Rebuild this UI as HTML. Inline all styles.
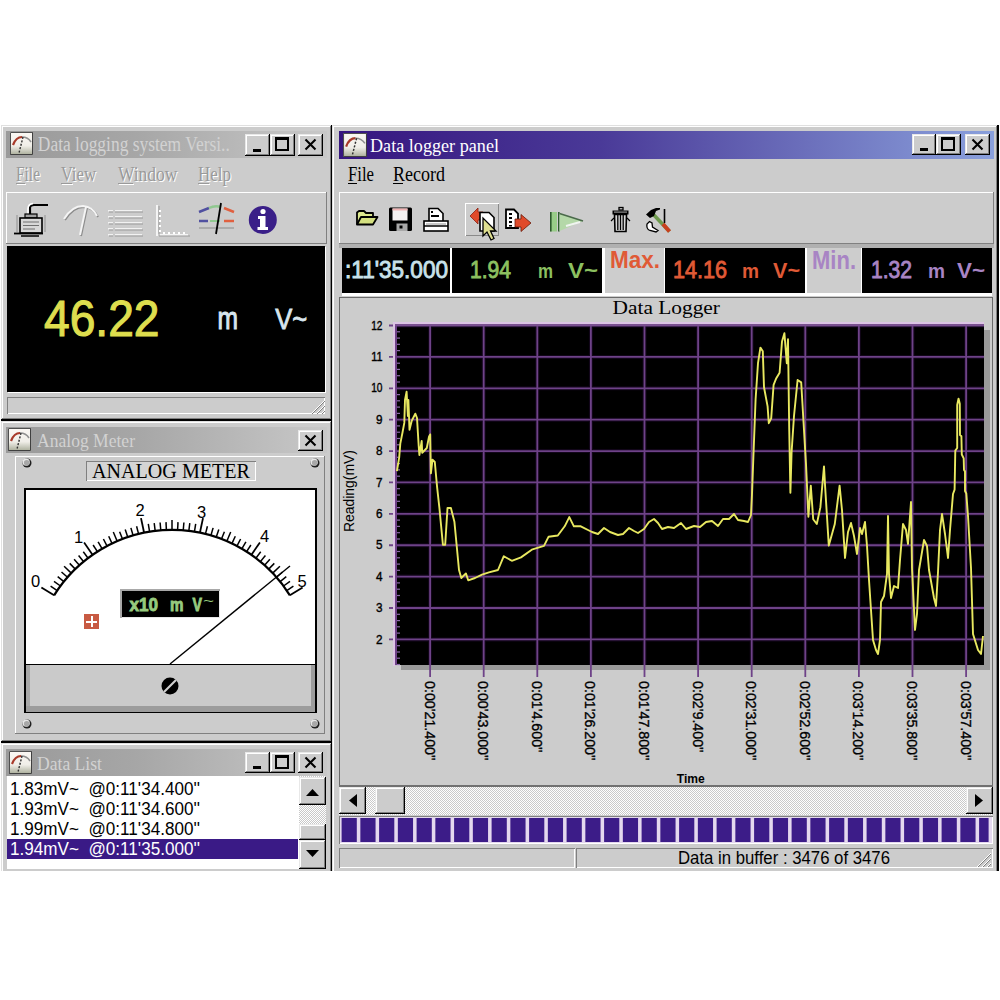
<!DOCTYPE html><html><head><meta charset="utf-8"><style>
html,body{margin:0;padding:0;background:#fff;width:1000px;height:1000px;overflow:hidden;position:relative}
svg{overflow:visible}
</style></head><body>
<div style="position:absolute;left:1px;top:125px;width:332px;height:296px;background:#cccccc;box-shadow:inset -2px -2px #000,inset 1px 1px #e0e0e0,inset -3px -3px #808080,inset 2px 2px #fff"></div>
<div style="position:absolute;left:6px;top:131px;width:321px;height:27px;background:linear-gradient(90deg,#9a9a9a,#a6a6a6 40%,#c8c8c8)"></div>
<svg style="position:absolute;left:10px;top:132px" width="23" height="23" viewBox="0 0 23 23">
<defs><linearGradient id="ig10132" x1="0" y1="0" x2="0" y2="1"><stop offset="0" stop-color="#fbf8f4"/><stop offset="0.6" stop-color="#f0eee8"/><stop offset="1" stop-color="#a8ac98"/></linearGradient></defs>
<rect x="0" y="0" width="23" height="23" fill="url(#ig10132)"/>
<path d="M0.5 23 L0.5 0.5 L23 0.5" stroke="#505050" stroke-width="1" fill="none"/>
<path d="M1 22.5 L22.5 22.5 L22.5 1" stroke="#404040" stroke-width="1" fill="none"/>
<path d="M3 13 Q6 5 12 5" stroke="#a83a2a" stroke-width="2.2" fill="none"/>
<path d="M12 5 Q18 5 21 10" stroke="#909090" stroke-width="1.5" fill="none"/>
<path d="M13 5 L9 21" stroke="#303030" stroke-width="1.4" stroke-dasharray="2 1.5" fill="none"/>
</svg>
<div style="position:absolute;left:245px;top:134px;width:25px;height:22px;background:#cccccc;box-shadow:inset -1px -1px #000,inset 1px 1px #e8e8e8,inset -2px -2px #808080,inset 2px 2px #fff;"></div>
<div style="position:absolute;left:253px;top:149px;width:8px;height:3px;background:#000"></div>
<div style="position:absolute;left:270px;top:134px;width:25px;height:22px;background:#cccccc;box-shadow:inset -1px -1px #000,inset 1px 1px #e8e8e8,inset -2px -2px #808080,inset 2px 2px #fff;"></div>
<div style="position:absolute;left:275px;top:137px;width:14px;height:14px;border:2px solid #000;border-top-width:3px;box-sizing:border-box"></div>
<div style="position:absolute;left:298px;top:134px;width:25px;height:22px;background:#cccccc;box-shadow:inset -1px -1px #000,inset 1px 1px #e8e8e8,inset -2px -2px #808080,inset 2px 2px #fff;"></div>
<svg style="position:absolute;left:298px;top:134px" width="25" height="22"><path d="M7.5 5.5 L17.5 15.5 M17.5 5.5 L7.5 15.5" stroke="#000" stroke-width="2.1"/></svg>
<div style="position:absolute;left:16px;top:183px;width:9px;height:1px;background:#9a9a9a;box-shadow:1px 1px #fff"></div>
<div style="position:absolute;left:60.8px;top:183px;width:11px;height:1px;background:#9a9a9a;box-shadow:1px 1px #fff"></div>
<div style="position:absolute;left:118px;top:183px;width:15px;height:1px;background:#9a9a9a;box-shadow:1px 1px #fff"></div>
<div style="position:absolute;left:198px;top:183px;width:11px;height:1px;background:#9a9a9a;box-shadow:1px 1px #fff"></div>
<div style="position:absolute;left:6px;top:192px;width:321px;height:52px;background:#cccccc;box-shadow:inset -1px -1px #808080,inset 1px 1px #fff;"></div>
<div style="position:absolute;left:7px;top:246px;width:318px;height:146px;background:#000;box-shadow:1px 1px #fff"></div>
<div style="position:absolute;left:7px;top:397px;width:318px;height:17px;background:#cccccc;box-shadow:inset 1px 1px #808080,inset -1px -1px #fff;"></div>
<div style="position:absolute;left:1px;top:421px;width:332px;height:322px;background:#cccccc;box-shadow:inset -2px -2px #000,inset 1px 1px #e0e0e0,inset -3px -3px #808080,inset 2px 2px #fff"></div>
<div style="position:absolute;left:6px;top:427px;width:321px;height:26px;background:linear-gradient(90deg,#9a9a9a,#a6a6a6 40%,#c8c8c8)"></div>
<svg style="position:absolute;left:8px;top:428px" width="23" height="23" viewBox="0 0 23 23">
<defs><linearGradient id="ig8428" x1="0" y1="0" x2="0" y2="1"><stop offset="0" stop-color="#fbf8f4"/><stop offset="0.6" stop-color="#f0eee8"/><stop offset="1" stop-color="#a8ac98"/></linearGradient></defs>
<rect x="0" y="0" width="23" height="23" fill="url(#ig8428)"/>
<path d="M0.5 23 L0.5 0.5 L23 0.5" stroke="#505050" stroke-width="1" fill="none"/>
<path d="M1 22.5 L22.5 22.5 L22.5 1" stroke="#404040" stroke-width="1" fill="none"/>
<path d="M3 13 Q6 5 12 5" stroke="#a83a2a" stroke-width="2.2" fill="none"/>
<path d="M12 5 Q18 5 21 10" stroke="#909090" stroke-width="1.5" fill="none"/>
<path d="M13 5 L9 21" stroke="#303030" stroke-width="1.4" stroke-dasharray="2 1.5" fill="none"/>
</svg>
<div style="position:absolute;left:298px;top:430px;width:25px;height:21px;background:#cccccc;box-shadow:inset -1px -1px #000,inset 1px 1px #e8e8e8,inset -2px -2px #808080,inset 2px 2px #fff;"></div>
<svg style="position:absolute;left:298px;top:430px" width="25" height="21"><path d="M7.5 5.5 L17.5 15.5 M17.5 5.5 L7.5 15.5" stroke="#000" stroke-width="2.1"/></svg>
<div style="position:absolute;left:15px;top:456px;width:310px;height:278px;background:#cccccc;box-shadow:inset -1px -1px #808080,inset 1px 1px #fff;"></div>
<div style="position:absolute;left:1px;top:743px;width:332px;height:140px;background:#cccccc;box-shadow:inset -2px -2px #000,inset 1px 1px #e0e0e0,inset -3px -3px #808080,inset 2px 2px #fff"></div>
<div style="position:absolute;left:6px;top:749px;width:321px;height:27px;background:linear-gradient(90deg,#9a9a9a,#a6a6a6 40%,#c8c8c8)"></div>
<svg style="position:absolute;left:9px;top:751px" width="23" height="23" viewBox="0 0 23 23">
<defs><linearGradient id="ig9751" x1="0" y1="0" x2="0" y2="1"><stop offset="0" stop-color="#fbf8f4"/><stop offset="0.6" stop-color="#f0eee8"/><stop offset="1" stop-color="#a8ac98"/></linearGradient></defs>
<rect x="0" y="0" width="23" height="23" fill="url(#ig9751)"/>
<path d="M0.5 23 L0.5 0.5 L23 0.5" stroke="#505050" stroke-width="1" fill="none"/>
<path d="M1 22.5 L22.5 22.5 L22.5 1" stroke="#404040" stroke-width="1" fill="none"/>
<path d="M3 13 Q6 5 12 5" stroke="#a83a2a" stroke-width="2.2" fill="none"/>
<path d="M12 5 Q18 5 21 10" stroke="#909090" stroke-width="1.5" fill="none"/>
<path d="M13 5 L9 21" stroke="#303030" stroke-width="1.4" stroke-dasharray="2 1.5" fill="none"/>
</svg>
<div style="position:absolute;left:245px;top:752px;width:25px;height:21px;background:#cccccc;box-shadow:inset -1px -1px #000,inset 1px 1px #e8e8e8,inset -2px -2px #808080,inset 2px 2px #fff;"></div>
<div style="position:absolute;left:253px;top:766px;width:8px;height:3px;background:#000"></div>
<div style="position:absolute;left:270px;top:752px;width:25px;height:21px;background:#cccccc;box-shadow:inset -1px -1px #000,inset 1px 1px #e8e8e8,inset -2px -2px #808080,inset 2px 2px #fff;"></div>
<div style="position:absolute;left:275px;top:755px;width:14px;height:14px;border:2px solid #000;border-top-width:3px;box-sizing:border-box"></div>
<div style="position:absolute;left:298px;top:752px;width:25px;height:21px;background:#cccccc;box-shadow:inset -1px -1px #000,inset 1px 1px #e8e8e8,inset -2px -2px #808080,inset 2px 2px #fff;"></div>
<svg style="position:absolute;left:298px;top:752px" width="25" height="21"><path d="M7.5 5.5 L17.5 15.5 M17.5 5.5 L7.5 15.5" stroke="#000" stroke-width="2.1"/></svg>
<div style="position:absolute;left:7px;top:776px;width:292px;height:93px;background:#fff"></div>
<div style="position:absolute;left:7px;top:839px;width:291px;height:20px;background:#3a1a86"></div>
<div style="position:absolute;left:332px;top:125px;width:667px;height:760px;background:#cccccc;box-shadow:inset -2px -2px #000,inset 1px 1px #e0e0e0,inset -3px -3px #808080,inset 2px 2px #fff"></div>
<div style="position:absolute;left:339px;top:131px;width:655px;height:28px;background:linear-gradient(90deg,#36167f,#4a3a98 40%,#8aa0dc)"></div>
<svg style="position:absolute;left:343px;top:133px" width="24" height="24" viewBox="0 0 23 23">
<defs><linearGradient id="ig343133" x1="0" y1="0" x2="0" y2="1"><stop offset="0" stop-color="#fbf8f4"/><stop offset="0.6" stop-color="#f0eee8"/><stop offset="1" stop-color="#a8ac98"/></linearGradient></defs>
<rect x="0" y="0" width="23" height="23" fill="url(#ig343133)"/>
<path d="M0.5 23 L0.5 0.5 L23 0.5" stroke="#505050" stroke-width="1" fill="none"/>
<path d="M1 22.5 L22.5 22.5 L22.5 1" stroke="#404040" stroke-width="1" fill="none"/>
<path d="M3 13 Q6 5 12 5" stroke="#a83a2a" stroke-width="2.2" fill="none"/>
<path d="M12 5 Q18 5 21 10" stroke="#909090" stroke-width="1.5" fill="none"/>
<path d="M13 5 L9 21" stroke="#303030" stroke-width="1.4" stroke-dasharray="2 1.5" fill="none"/>
</svg>
<div style="position:absolute;left:912px;top:134px;width:24px;height:21px;background:#cccccc;box-shadow:inset -1px -1px #000,inset 1px 1px #e8e8e8,inset -2px -2px #808080,inset 2px 2px #fff;"></div>
<div style="position:absolute;left:920px;top:148px;width:8px;height:3px;background:#000"></div>
<div style="position:absolute;left:936px;top:134px;width:25px;height:21px;background:#cccccc;box-shadow:inset -1px -1px #000,inset 1px 1px #e8e8e8,inset -2px -2px #808080,inset 2px 2px #fff;"></div>
<div style="position:absolute;left:941px;top:137px;width:14px;height:14px;border:2px solid #000;border-top-width:3px;box-sizing:border-box"></div>
<div style="position:absolute;left:965px;top:134px;width:25px;height:21px;background:#cccccc;box-shadow:inset -1px -1px #000,inset 1px 1px #e8e8e8,inset -2px -2px #808080,inset 2px 2px #fff;"></div>
<svg style="position:absolute;left:965px;top:134px" width="25" height="21"><path d="M7.5 5.5 L17.5 15.5 M17.5 5.5 L7.5 15.5" stroke="#000" stroke-width="2.1"/></svg>
<div style="position:absolute;left:348px;top:183px;width:9px;height:1px;background:#000"></div>
<div style="position:absolute;left:393px;top:183px;width:10px;height:1px;background:#000"></div>
<div style="position:absolute;left:339px;top:192px;width:655px;height:52px;background:#cccccc;box-shadow:inset -1px -1px #808080,inset 1px 1px #fff;"></div>
<div style="position:absolute;left:339px;top:244px;width:655px;height:4px;background:#b0b0b0"></div>
<div style="position:absolute;left:342px;top:248px;width:650px;height:48px;background:#fff"></div>
<div style="position:absolute;left:342px;top:248px;width:108px;height:45px;background:#000"></div>
<div style="position:absolute;left:452px;top:248px;width:150px;height:45px;background:#000"></div>
<div style="position:absolute;left:605px;top:248px;width:59px;height:45px;background:#cdcdcd"></div>
<div style="position:absolute;left:665px;top:248px;width:140px;height:45px;background:#000"></div>
<div style="position:absolute;left:807px;top:248px;width:54px;height:45px;background:#cdcdcd"></div>
<div style="position:absolute;left:862px;top:248px;width:130px;height:45px;background:#000"></div>
<div style="position:absolute;left:339px;top:297px;width:654px;height:489px;background:#cccccc;box-shadow:inset 0 0 0 1px #6a6a6a"></div>
<div style="position:absolute;left:86px;top:461px;width:170px;height:20px;background:#d4d4d4;box-shadow:inset 1px 1px #808080,inset -1px -1px #fff;"></div>
<div style="position:absolute;left:24px;top:488px;width:293px;height:225px;background:#000"></div>
<div style="position:absolute;left:26px;top:490px;width:289px;height:174px;background:#fff"></div>
<div style="position:absolute;left:26px;top:665px;width:289px;height:47px;background:#cacaca;box-shadow:inset -4px -6px #9c9c9c,inset 4px 0 #a8a8a8"></div>
<div style="position:absolute;left:84px;top:614px;width:15px;height:15px;background:#c85a42"></div>
<div style="position:absolute;left:86px;top:620.5px;width:11px;height:2px;background:#fff"></div>
<div style="position:absolute;left:90.5px;top:616px;width:2px;height:11px;background:#fff"></div>
<div style="position:absolute;left:120px;top:589px;width:100px;height:29px;background:#000;box-shadow:inset 2px 2px #a8a8a8,inset -1px -1px #e8e8e8"></div>
<div style="position:absolute;left:299px;top:776px;width:27px;height:93px;background:repeating-conic-gradient(#fff 0 25%,#c8c8c8 0 50%) 0 0/2px 2px"></div>
<div style="position:absolute;left:299px;top:777px;width:27px;height:28px;background:#cccccc;box-shadow:inset -1px -1px #000,inset 1px 1px #e8e8e8,inset -2px -2px #808080,inset 2px 2px #fff;"></div>
<div style="position:absolute;left:299px;top:824px;width:27px;height:16px;background:#cccccc;box-shadow:inset -1px -1px #000,inset 1px 1px #e8e8e8,inset -2px -2px #808080,inset 2px 2px #fff;"></div>
<div style="position:absolute;left:299px;top:840px;width:27px;height:29px;background:#cccccc;box-shadow:inset -1px -1px #000,inset 1px 1px #e8e8e8,inset -2px -2px #808080,inset 2px 2px #fff;"></div>
<div style="position:absolute;left:339px;top:787px;width:654px;height:28px;background:repeating-conic-gradient(#fff 0 25%,#cacaca 0 50%) 0 0/2px 2px"></div>
<div style="position:absolute;left:339px;top:785px;width:654px;height:2px;background:#707070"></div>
<div style="position:absolute;left:339px;top:787px;width:27px;height:27px;background:#cccccc;box-shadow:inset -1px -1px #000,inset 1px 1px #e8e8e8,inset -2px -2px #808080,inset 2px 2px #fff;"></div>
<div style="position:absolute;left:375px;top:787px;width:30px;height:27px;background:#cccccc;box-shadow:inset -1px -1px #000,inset 1px 1px #e8e8e8,inset -2px -2px #808080,inset 2px 2px #fff;"></div>
<div style="position:absolute;left:966px;top:787px;width:27px;height:27px;background:#cccccc;box-shadow:inset -1px -1px #000,inset 1px 1px #e8e8e8,inset -2px -2px #808080,inset 2px 2px #fff;"></div>
<div style="position:absolute;left:339px;top:816px;width:654px;height:28px;background:#e4d8ee;box-shadow:inset 1px 1px #808080,inset -1px -1px #fff"></div>
<div style="position:absolute;left:339px;top:848px;width:236px;height:20px;background:#cccccc;box-shadow:inset 1px 1px #808080,inset -1px -1px #fff;"></div>
<div style="position:absolute;left:576px;top:848px;width:417px;height:20px;background:#cccccc;box-shadow:inset 1px 1px #808080,inset -1px -1px #fff;"></div>
<div style="position:absolute;left:0px;top:871px;width:1000px;height:129px;background:#fff"></div>
<div style="position:absolute;left:465px;top:203px;width:34px;height:33px;box-shadow:inset 1px 1px #fff,inset -1px -1px #8a8a8a"></div>
<svg style="position:absolute;left:0;top:0" width="1000" height="1000"><text x="37.8" y="151.2" font-family="&quot;Liberation Serif&quot;, serif" font-size="21.37" fill="#d2d2d2" font-weight="normal" text-anchor="start" textLength="192" lengthAdjust="spacingAndGlyphs" >Data logging system Versi..</text>
<text x="17" y="181.5" font-family="&quot;Liberation Serif&quot;, serif" font-size="20.61" fill="#ffffff" font-weight="normal" text-anchor="start" textLength="24" lengthAdjust="spacingAndGlyphs" >File</text>
<text x="16" y="180.5" font-family="&quot;Liberation Serif&quot;, serif" font-size="20.61" fill="#9a9a9a" font-weight="normal" text-anchor="start" textLength="24" lengthAdjust="spacingAndGlyphs" >File</text>
<text x="61.8" y="181.5" font-family="&quot;Liberation Serif&quot;, serif" font-size="20.61" fill="#ffffff" font-weight="normal" text-anchor="start" textLength="35.2" lengthAdjust="spacingAndGlyphs" >View</text>
<text x="60.8" y="180.5" font-family="&quot;Liberation Serif&quot;, serif" font-size="20.61" fill="#9a9a9a" font-weight="normal" text-anchor="start" textLength="35.2" lengthAdjust="spacingAndGlyphs" >View</text>
<text x="119" y="181.5" font-family="&quot;Liberation Serif&quot;, serif" font-size="20.61" fill="#ffffff" font-weight="normal" text-anchor="start" textLength="59.400000000000006" lengthAdjust="spacingAndGlyphs" >Window</text>
<text x="118" y="180.5" font-family="&quot;Liberation Serif&quot;, serif" font-size="20.61" fill="#9a9a9a" font-weight="normal" text-anchor="start" textLength="59.400000000000006" lengthAdjust="spacingAndGlyphs" >Window</text>
<text x="199" y="181.5" font-family="&quot;Liberation Serif&quot;, serif" font-size="20.61" fill="#ffffff" font-weight="normal" text-anchor="start" textLength="33" lengthAdjust="spacingAndGlyphs" >Help</text>
<text x="198" y="180.5" font-family="&quot;Liberation Serif&quot;, serif" font-size="20.61" fill="#9a9a9a" font-weight="normal" text-anchor="start" textLength="33" lengthAdjust="spacingAndGlyphs" >Help</text>
<text x="44" y="336" font-family="&quot;Liberation Sans&quot;, sans-serif" font-size="49.42" fill="#dede4e" font-weight="normal" text-anchor="start" textLength="115.5" lengthAdjust="spacingAndGlyphs" stroke="#dede4e" stroke-width="1.1">46.22</text>
<text x="37" y="447" font-family="&quot;Liberation Serif&quot;, serif" font-size="19.85" fill="#d2d2d2" font-weight="normal" text-anchor="start" textLength="98" lengthAdjust="spacingAndGlyphs" >Analog Meter</text>
<text x="37" y="770" font-family="&quot;Liberation Serif&quot;, serif" font-size="19.85" fill="#d2d2d2" font-weight="normal" text-anchor="start" textLength="65" lengthAdjust="spacingAndGlyphs" >Data List</text>
<text x="370" y="152" font-family="&quot;Liberation Serif&quot;, serif" font-size="19.85" fill="#ffffff" font-weight="normal" text-anchor="start" textLength="129" lengthAdjust="spacingAndGlyphs" >Data logger panel</text>
<text x="348" y="180.8" font-family="&quot;Liberation Serif&quot;, serif" font-size="20.61" fill="#000" font-weight="normal" text-anchor="start" textLength="26" lengthAdjust="spacingAndGlyphs" >File</text>
<text x="393" y="180.8" font-family="&quot;Liberation Serif&quot;, serif" font-size="20.61" fill="#000" font-weight="normal" text-anchor="start" textLength="52" lengthAdjust="spacingAndGlyphs" >Record</text>
<rect x="401" y="665" width="587" height="5" fill="#9a9a9a"/>
<rect x="984" y="330" width="6" height="340" fill="#9a9a9a"/>
<rect x="395" y="324" width="589" height="341" fill="#000"/>
<line x1="395" y1="639.4" x2="984" y2="639.4" stroke="#12061a" stroke-width="4"/>
<line x1="395" y1="608.01" x2="984" y2="608.01" stroke="#12061a" stroke-width="4"/>
<line x1="395" y1="576.62" x2="984" y2="576.62" stroke="#12061a" stroke-width="4"/>
<line x1="395" y1="545.23" x2="984" y2="545.23" stroke="#12061a" stroke-width="4"/>
<line x1="395" y1="513.84" x2="984" y2="513.84" stroke="#12061a" stroke-width="4"/>
<line x1="395" y1="482.45" x2="984" y2="482.45" stroke="#12061a" stroke-width="4"/>
<line x1="395" y1="451.06" x2="984" y2="451.06" stroke="#12061a" stroke-width="4"/>
<line x1="395" y1="419.67" x2="984" y2="419.67" stroke="#12061a" stroke-width="4"/>
<line x1="395" y1="388.28" x2="984" y2="388.28" stroke="#12061a" stroke-width="4"/>
<line x1="395" y1="356.89" x2="984" y2="356.89" stroke="#12061a" stroke-width="4"/>
<line x1="395" y1="325.5" x2="984" y2="325.5" stroke="#12061a" stroke-width="4"/>
<line x1="430.1" y1="324" x2="430.1" y2="665" stroke="#12061a" stroke-width="4"/>
<line x1="483.7" y1="324" x2="483.7" y2="665" stroke="#12061a" stroke-width="4"/>
<line x1="537.3" y1="324" x2="537.3" y2="665" stroke="#12061a" stroke-width="4"/>
<line x1="590.9" y1="324" x2="590.9" y2="665" stroke="#12061a" stroke-width="4"/>
<line x1="644.5" y1="324" x2="644.5" y2="665" stroke="#12061a" stroke-width="4"/>
<line x1="698.1" y1="324" x2="698.1" y2="665" stroke="#12061a" stroke-width="4"/>
<line x1="751.7" y1="324" x2="751.7" y2="665" stroke="#12061a" stroke-width="4"/>
<line x1="805.3" y1="324" x2="805.3" y2="665" stroke="#12061a" stroke-width="4"/>
<line x1="858.9" y1="324" x2="858.9" y2="665" stroke="#12061a" stroke-width="4"/>
<line x1="912.5" y1="324" x2="912.5" y2="665" stroke="#12061a" stroke-width="4"/>
<line x1="966.1" y1="324" x2="966.1" y2="665" stroke="#12061a" stroke-width="4"/>
<line x1="389" y1="639.4" x2="984" y2="639.4" stroke="#6e4288" stroke-width="1.8"/>
<text x="382.5" y="643.6" font-family="&quot;Liberation Sans&quot;, sans-serif" font-size="13.5" fill="#000" font-weight="normal" text-anchor="end" textLength="6.5" lengthAdjust="spacingAndGlyphs" stroke="#000" stroke-width="0.4">2</text>
<line x1="389" y1="608.01" x2="984" y2="608.01" stroke="#6e4288" stroke-width="1.8"/>
<text x="382.5" y="612.21" font-family="&quot;Liberation Sans&quot;, sans-serif" font-size="13.5" fill="#000" font-weight="normal" text-anchor="end" textLength="6.5" lengthAdjust="spacingAndGlyphs" stroke="#000" stroke-width="0.4">3</text>
<line x1="389" y1="576.62" x2="984" y2="576.62" stroke="#6e4288" stroke-width="1.8"/>
<text x="382.5" y="580.82" font-family="&quot;Liberation Sans&quot;, sans-serif" font-size="13.5" fill="#000" font-weight="normal" text-anchor="end" textLength="6.5" lengthAdjust="spacingAndGlyphs" stroke="#000" stroke-width="0.4">4</text>
<line x1="389" y1="545.23" x2="984" y2="545.23" stroke="#6e4288" stroke-width="1.8"/>
<text x="382.5" y="549.4300000000001" font-family="&quot;Liberation Sans&quot;, sans-serif" font-size="13.5" fill="#000" font-weight="normal" text-anchor="end" textLength="6.5" lengthAdjust="spacingAndGlyphs" stroke="#000" stroke-width="0.4">5</text>
<line x1="389" y1="513.84" x2="984" y2="513.84" stroke="#6e4288" stroke-width="1.8"/>
<text x="382.5" y="518.0400000000001" font-family="&quot;Liberation Sans&quot;, sans-serif" font-size="13.5" fill="#000" font-weight="normal" text-anchor="end" textLength="6.5" lengthAdjust="spacingAndGlyphs" stroke="#000" stroke-width="0.4">6</text>
<line x1="389" y1="482.45" x2="984" y2="482.45" stroke="#6e4288" stroke-width="1.8"/>
<text x="382.5" y="486.65" font-family="&quot;Liberation Sans&quot;, sans-serif" font-size="13.5" fill="#000" font-weight="normal" text-anchor="end" textLength="6.5" lengthAdjust="spacingAndGlyphs" stroke="#000" stroke-width="0.4">7</text>
<line x1="389" y1="451.06" x2="984" y2="451.06" stroke="#6e4288" stroke-width="1.8"/>
<text x="382.5" y="455.26" font-family="&quot;Liberation Sans&quot;, sans-serif" font-size="13.5" fill="#000" font-weight="normal" text-anchor="end" textLength="6.5" lengthAdjust="spacingAndGlyphs" stroke="#000" stroke-width="0.4">8</text>
<line x1="389" y1="419.67" x2="984" y2="419.67" stroke="#6e4288" stroke-width="1.8"/>
<text x="382.5" y="423.87" font-family="&quot;Liberation Sans&quot;, sans-serif" font-size="13.5" fill="#000" font-weight="normal" text-anchor="end" textLength="6.5" lengthAdjust="spacingAndGlyphs" stroke="#000" stroke-width="0.4">9</text>
<line x1="389" y1="388.28" x2="984" y2="388.28" stroke="#6e4288" stroke-width="1.8"/>
<text x="382.5" y="392.47999999999996" font-family="&quot;Liberation Sans&quot;, sans-serif" font-size="13.5" fill="#000" font-weight="normal" text-anchor="end" textLength="11.3" lengthAdjust="spacingAndGlyphs" stroke="#000" stroke-width="0.4">10</text>
<line x1="389" y1="356.89" x2="984" y2="356.89" stroke="#6e4288" stroke-width="1.8"/>
<text x="382.5" y="361.09" font-family="&quot;Liberation Sans&quot;, sans-serif" font-size="13.5" fill="#000" font-weight="normal" text-anchor="end" textLength="11.3" lengthAdjust="spacingAndGlyphs" stroke="#000" stroke-width="0.4">11</text>
<line x1="389" y1="325.5" x2="984" y2="325.5" stroke="#6e4288" stroke-width="1.8"/>
<text x="382.5" y="329.7" font-family="&quot;Liberation Sans&quot;, sans-serif" font-size="13.5" fill="#000" font-weight="normal" text-anchor="end" textLength="11.3" lengthAdjust="spacingAndGlyphs" stroke="#000" stroke-width="0.4">12</text>
<line x1="430.1" y1="324" x2="430.1" y2="677" stroke="#6e4288" stroke-width="1.8"/>
<line x1="483.7" y1="324" x2="483.7" y2="677" stroke="#6e4288" stroke-width="1.8"/>
<line x1="537.3" y1="324" x2="537.3" y2="677" stroke="#6e4288" stroke-width="1.8"/>
<line x1="590.9" y1="324" x2="590.9" y2="677" stroke="#6e4288" stroke-width="1.8"/>
<line x1="644.5" y1="324" x2="644.5" y2="677" stroke="#6e4288" stroke-width="1.8"/>
<line x1="698.1" y1="324" x2="698.1" y2="677" stroke="#6e4288" stroke-width="1.8"/>
<line x1="751.7" y1="324" x2="751.7" y2="677" stroke="#6e4288" stroke-width="1.8"/>
<line x1="805.3" y1="324" x2="805.3" y2="677" stroke="#6e4288" stroke-width="1.8"/>
<line x1="858.9" y1="324" x2="858.9" y2="677" stroke="#6e4288" stroke-width="1.8"/>
<line x1="912.5" y1="324" x2="912.5" y2="677" stroke="#6e4288" stroke-width="1.8"/>
<line x1="966.1" y1="324" x2="966.1" y2="677" stroke="#6e4288" stroke-width="1.8"/>
<line x1="395" y1="331.8" x2="400" y2="331.8" stroke="#8a6aa8" stroke-width="1.2"/>
<line x1="395" y1="338.1" x2="400" y2="338.1" stroke="#8a6aa8" stroke-width="1.2"/>
<line x1="395" y1="344.3" x2="400" y2="344.3" stroke="#8a6aa8" stroke-width="1.2"/>
<line x1="395" y1="350.6" x2="400" y2="350.6" stroke="#8a6aa8" stroke-width="1.2"/>
<line x1="395" y1="363.2" x2="400" y2="363.2" stroke="#8a6aa8" stroke-width="1.2"/>
<line x1="395" y1="369.4" x2="400" y2="369.4" stroke="#8a6aa8" stroke-width="1.2"/>
<line x1="395" y1="375.7" x2="400" y2="375.7" stroke="#8a6aa8" stroke-width="1.2"/>
<line x1="395" y1="382.0" x2="400" y2="382.0" stroke="#8a6aa8" stroke-width="1.2"/>
<line x1="395" y1="394.6" x2="400" y2="394.6" stroke="#8a6aa8" stroke-width="1.2"/>
<line x1="395" y1="400.8" x2="400" y2="400.8" stroke="#8a6aa8" stroke-width="1.2"/>
<line x1="395" y1="407.1" x2="400" y2="407.1" stroke="#8a6aa8" stroke-width="1.2"/>
<line x1="395" y1="413.4" x2="400" y2="413.4" stroke="#8a6aa8" stroke-width="1.2"/>
<line x1="395" y1="425.9" x2="400" y2="425.9" stroke="#8a6aa8" stroke-width="1.2"/>
<line x1="395" y1="432.2" x2="400" y2="432.2" stroke="#8a6aa8" stroke-width="1.2"/>
<line x1="395" y1="438.5" x2="400" y2="438.5" stroke="#8a6aa8" stroke-width="1.2"/>
<line x1="395" y1="444.8" x2="400" y2="444.8" stroke="#8a6aa8" stroke-width="1.2"/>
<line x1="395" y1="457.3" x2="400" y2="457.3" stroke="#8a6aa8" stroke-width="1.2"/>
<line x1="395" y1="463.6" x2="400" y2="463.6" stroke="#8a6aa8" stroke-width="1.2"/>
<line x1="395" y1="469.9" x2="400" y2="469.9" stroke="#8a6aa8" stroke-width="1.2"/>
<line x1="395" y1="476.2" x2="400" y2="476.2" stroke="#8a6aa8" stroke-width="1.2"/>
<line x1="395" y1="488.7" x2="400" y2="488.7" stroke="#8a6aa8" stroke-width="1.2"/>
<line x1="395" y1="495.0" x2="400" y2="495.0" stroke="#8a6aa8" stroke-width="1.2"/>
<line x1="395" y1="501.3" x2="400" y2="501.3" stroke="#8a6aa8" stroke-width="1.2"/>
<line x1="395" y1="507.6" x2="400" y2="507.6" stroke="#8a6aa8" stroke-width="1.2"/>
<line x1="395" y1="520.1" x2="400" y2="520.1" stroke="#8a6aa8" stroke-width="1.2"/>
<line x1="395" y1="526.4" x2="400" y2="526.4" stroke="#8a6aa8" stroke-width="1.2"/>
<line x1="395" y1="532.7" x2="400" y2="532.7" stroke="#8a6aa8" stroke-width="1.2"/>
<line x1="395" y1="539.0" x2="400" y2="539.0" stroke="#8a6aa8" stroke-width="1.2"/>
<line x1="395" y1="551.5" x2="400" y2="551.5" stroke="#8a6aa8" stroke-width="1.2"/>
<line x1="395" y1="557.8" x2="400" y2="557.8" stroke="#8a6aa8" stroke-width="1.2"/>
<line x1="395" y1="564.1" x2="400" y2="564.1" stroke="#8a6aa8" stroke-width="1.2"/>
<line x1="395" y1="570.3" x2="400" y2="570.3" stroke="#8a6aa8" stroke-width="1.2"/>
<line x1="395" y1="582.9" x2="400" y2="582.9" stroke="#8a6aa8" stroke-width="1.2"/>
<line x1="395" y1="589.2" x2="400" y2="589.2" stroke="#8a6aa8" stroke-width="1.2"/>
<line x1="395" y1="595.5" x2="400" y2="595.5" stroke="#8a6aa8" stroke-width="1.2"/>
<line x1="395" y1="601.7" x2="400" y2="601.7" stroke="#8a6aa8" stroke-width="1.2"/>
<line x1="395" y1="614.3" x2="400" y2="614.3" stroke="#8a6aa8" stroke-width="1.2"/>
<line x1="395" y1="620.6" x2="400" y2="620.6" stroke="#8a6aa8" stroke-width="1.2"/>
<line x1="395" y1="626.8" x2="400" y2="626.8" stroke="#8a6aa8" stroke-width="1.2"/>
<line x1="395" y1="633.1" x2="400" y2="633.1" stroke="#8a6aa8" stroke-width="1.2"/>
<line x1="395" y1="645.7" x2="400" y2="645.7" stroke="#8a6aa8" stroke-width="1.2"/>
<line x1="395" y1="652.0" x2="400" y2="652.0" stroke="#8a6aa8" stroke-width="1.2"/>
<line x1="395" y1="658.2" x2="400" y2="658.2" stroke="#8a6aa8" stroke-width="1.2"/>
<line x1="395" y1="664.5" x2="400" y2="664.5" stroke="#8a6aa8" stroke-width="1.2"/>
<line x1="396" y1="324" x2="396" y2="665" stroke="#6e4288" stroke-width="2"/>
<line x1="394" y1="323" x2="394" y2="666" stroke="#dcc4e4" stroke-width="2"/>
<line x1="393" y1="323" x2="984" y2="323" stroke="#dcc4e4" stroke-width="2"/>
<line x1="395" y1="325" x2="984" y2="325" stroke="#7a5090" stroke-width="2"/>
<g transform="translate(424.6,681) rotate(90)">
<text x="0" y="0" font-family="&quot;Liberation Sans&quot;, sans-serif" font-size="15" fill="#000" font-weight="normal" text-anchor="start" textLength="79.5" lengthAdjust="spacingAndGlyphs" stroke="#000" stroke-width="0.35">0:00'21.400''</text>
</g>
<g transform="translate(478.2,681) rotate(90)">
<text x="0" y="0" font-family="&quot;Liberation Sans&quot;, sans-serif" font-size="15" fill="#000" font-weight="normal" text-anchor="start" textLength="79.5" lengthAdjust="spacingAndGlyphs" stroke="#000" stroke-width="0.35">0:00'43.000''</text>
</g>
<g transform="translate(531.8,681) rotate(90)">
<text x="0" y="0" font-family="&quot;Liberation Sans&quot;, sans-serif" font-size="15" fill="#000" font-weight="normal" text-anchor="start" textLength="71.57" lengthAdjust="spacingAndGlyphs" stroke="#000" stroke-width="0.35">0:01'4.600''</text>
</g>
<g transform="translate(585.4,681) rotate(90)">
<text x="0" y="0" font-family="&quot;Liberation Sans&quot;, sans-serif" font-size="15" fill="#000" font-weight="normal" text-anchor="start" textLength="79.5" lengthAdjust="spacingAndGlyphs" stroke="#000" stroke-width="0.35">0:01'26.200''</text>
</g>
<g transform="translate(639.0,681) rotate(90)">
<text x="0" y="0" font-family="&quot;Liberation Sans&quot;, sans-serif" font-size="15" fill="#000" font-weight="normal" text-anchor="start" textLength="79.5" lengthAdjust="spacingAndGlyphs" stroke="#000" stroke-width="0.35">0:01'47.800''</text>
</g>
<g transform="translate(692.6,681) rotate(90)">
<text x="0" y="0" font-family="&quot;Liberation Sans&quot;, sans-serif" font-size="15" fill="#000" font-weight="normal" text-anchor="start" textLength="71.57" lengthAdjust="spacingAndGlyphs" stroke="#000" stroke-width="0.35">0:02'9.400''</text>
</g>
<g transform="translate(746.2,681) rotate(90)">
<text x="0" y="0" font-family="&quot;Liberation Sans&quot;, sans-serif" font-size="15" fill="#000" font-weight="normal" text-anchor="start" textLength="79.5" lengthAdjust="spacingAndGlyphs" stroke="#000" stroke-width="0.35">0:02'31.000''</text>
</g>
<g transform="translate(799.8,681) rotate(90)">
<text x="0" y="0" font-family="&quot;Liberation Sans&quot;, sans-serif" font-size="15" fill="#000" font-weight="normal" text-anchor="start" textLength="79.5" lengthAdjust="spacingAndGlyphs" stroke="#000" stroke-width="0.35">0:02'52.600''</text>
</g>
<g transform="translate(853.4,681) rotate(90)">
<text x="0" y="0" font-family="&quot;Liberation Sans&quot;, sans-serif" font-size="15" fill="#000" font-weight="normal" text-anchor="start" textLength="79.5" lengthAdjust="spacingAndGlyphs" stroke="#000" stroke-width="0.35">0:03'14.200''</text>
</g>
<g transform="translate(907.0,681) rotate(90)">
<text x="0" y="0" font-family="&quot;Liberation Sans&quot;, sans-serif" font-size="15" fill="#000" font-weight="normal" text-anchor="start" textLength="79.5" lengthAdjust="spacingAndGlyphs" stroke="#000" stroke-width="0.35">0:03'35.800''</text>
</g>
<g transform="translate(960.6,681) rotate(90)">
<text x="0" y="0" font-family="&quot;Liberation Sans&quot;, sans-serif" font-size="15" fill="#000" font-weight="normal" text-anchor="start" textLength="79.5" lengthAdjust="spacingAndGlyphs" stroke="#000" stroke-width="0.35">0:03'57.400''</text>
</g>
<g transform="translate(354,491) rotate(-90)">
<text x="0" y="0" font-family="&quot;Liberation Sans&quot;, sans-serif" font-size="14" fill="#000" font-weight="normal" text-anchor="middle" textLength="82" lengthAdjust="spacingAndGlyphs" >Reading(mV)</text>
</g>
<text x="676.8" y="783" font-family="&quot;Liberation Sans&quot;, sans-serif" font-size="12" fill="#000" font-weight="bold" text-anchor="start" textLength="28" lengthAdjust="spacingAndGlyphs" >Time</text>
<text x="612.5" y="313.5" font-family="&quot;Liberation Serif&quot;, serif" font-size="19.08" fill="#000" font-weight="normal" text-anchor="start" textLength="107.5" lengthAdjust="spacingAndGlyphs" >Data Logger</text>
<path d="M396.9 471.1 L399.2 457.4 L400.3 443.6 L402.6 432.0 L404.3 422.9 L405.0 400.0 L406.6 391.8 L407.9 416.0 L408.4 400.0 L409.5 429.8 L411.8 420.6 L415.3 413.7 L417.0 418.0 L418.7 445.9 L419.4 455.0 L421.7 441.0 L422.2 452.8 L426.8 448.0 L429.0 436.7 L430.2 434.4 L430.9 473.4 L432.5 459.7 L434.8 462.0 L437.1 487.2 L439.4 508.0 L442.9 544.7 L445.2 544.7 L447.5 508.0 L450.9 508.0 L454.4 521.7 L459.0 570.0 L461.3 578.0 L465.9 573.4 L468.2 580.3 L475.0 578.0 L482.0 574.6 L488.9 572.3 L498.0 570.0 L503.8 556.2 L511.8 560.8 L521.0 557.4 L532.5 549.3 L544.0 545.9 L548.6 536.7 L557.8 535.5 L564.7 526.3 L569.3 517.1 L573.9 526.3 L580.8 526.3 L590.0 531.0 L592.0 532.0 L598.0 534.0 L604.0 528.0 L610.0 532.0 L618.0 535.0 L623.0 534.0 L629.0 528.0 L634.0 531.0 L638.0 533.0 L644.0 529.0 L649.0 522.0 L654.0 519.0 L658.0 523.0 L662.0 529.0 L668.0 527.0 L674.0 528.0 L681.0 523.0 L686.0 529.0 L694.0 526.0 L700.0 527.0 L706.0 522.0 L712.0 521.0 L718.0 526.0 L723.0 519.0 L729.0 519.0 L734.0 514.0 L738.0 520.0 L744.0 521.0 L748.0 522.0 L751.0 515.0 L752.0 494.0 L753.2 461.6 L755.6 399.2 L758.0 363.2 L760.4 347.6 L762.8 351.2 L764.0 387.2 L767.6 406.4 L768.8 423.2 L771.2 418.4 L773.6 384.8 L776.0 378.8 L779.6 372.8 L782.0 341.6 L784.4 333.2 L786.8 363.2 L788.0 339.2 L789.2 428.0 L790.4 492.8 L791.6 452.0 L794.0 416.0 L797.6 380.0 L801.2 382.4 L803.6 423.2 L806.0 464.0 L808.4 516.8 L810.8 485.6 L813.2 519.2 L816.8 524.0 L820.4 507.2 L824.0 466.4 L825.2 488.0 L828.8 545.6 L834.8 524.0 L839.6 485.6 L842.0 510.0 L845.0 558.0 L848.0 532.0 L851.0 523.0 L854.0 536.0 L857.0 554.0 L860.0 528.0 L862.0 534.0 L865.0 522.0 L867.0 546.0 L869.0 580.0 L871.0 610.0 L873.0 640.0 L876.0 650.0 L878.0 654.0 L880.0 640.0 L881.0 602.0 L884.0 596.0 L887.0 574.0 L888.0 516.0 L889.0 574.0 L891.0 598.0 L894.0 586.0 L898.0 588.0 L900.0 560.0 L903.0 524.0 L906.0 530.0 L908.0 544.0 L911.0 502.0 L912.0 568.0 L915.0 630.0 L917.0 614.0 L919.0 570.0 L924.0 540.0 L927.0 546.0 L929.0 570.0 L934.0 598.0 L936.0 606.0 L938.0 572.0 L940.0 530.0 L942.0 514.0 L945.0 534.0 L948.0 558.0 L950.0 530.0 L953.0 494.0 L954.6 489.6 L955.3 450.6 L957.2 448.0 L957.2 405.0 L958.5 398.6 L959.8 403.8 L960.0 435.0 L961.4 436.3 L961.8 454.5 L963.7 458.4 L964.0 470.0 L965.0 471.4 L965.0 491.0 L966.3 493.5 L968.0 516.0 L971.0 568.0 L973.0 634.0 L978.0 650.0 L981.0 654.0 L983.0 636.0" fill="none" stroke="#e8e860" stroke-width="1.9" stroke-linejoin="round"/>
<text x="217.5" y="329" font-family="&quot;Liberation Sans&quot;, sans-serif" font-size="32" fill="#d8e6ee" font-weight="normal" text-anchor="start" textLength="20.5" lengthAdjust="spacingAndGlyphs" stroke="#d8e6ee" stroke-width="1">m</text>
<text x="275.2" y="329" font-family="&quot;Liberation Sans&quot;, sans-serif" font-size="30" fill="#d8e6ee" font-weight="normal" text-anchor="start" textLength="32" lengthAdjust="spacingAndGlyphs" stroke="#d8e6ee" stroke-width="0.8">V~</text>
<text x="345" y="278" font-family="&quot;Liberation Sans&quot;, sans-serif" font-size="24.71" fill="#c8e2ea" font-weight="normal" text-anchor="start" textLength="103" lengthAdjust="spacingAndGlyphs" stroke="#c8e2ea" stroke-width="0.9">:11'35.000</text>
<text x="470" y="278" font-family="&quot;Liberation Sans&quot;, sans-serif" font-size="24.71" fill="#8cc060" font-weight="normal" text-anchor="start" textLength="41" lengthAdjust="spacingAndGlyphs" stroke="#8cc060" stroke-width="0.9">1.94</text>
<text x="538" y="278" font-family="&quot;Liberation Sans&quot;, sans-serif" font-size="21" fill="#8cc060" font-weight="bold" text-anchor="start" textLength="15" lengthAdjust="spacingAndGlyphs" >m</text>
<text x="568" y="278" font-family="&quot;Liberation Sans&quot;, sans-serif" font-size="22" fill="#8cc060" font-weight="bold" text-anchor="start" textLength="30" lengthAdjust="spacingAndGlyphs" >V~</text>
<text x="610" y="268" font-family="&quot;Liberation Sans&quot;, sans-serif" font-size="24.71" fill="#e05a36" font-weight="bold" text-anchor="start" textLength="50" lengthAdjust="spacingAndGlyphs" >Max.</text>
<text x="673" y="278" font-family="&quot;Liberation Sans&quot;, sans-serif" font-size="24.71" fill="#e05a36" font-weight="normal" text-anchor="start" textLength="54" lengthAdjust="spacingAndGlyphs" stroke="#e05a36" stroke-width="0.9">14.16</text>
<text x="742" y="278" font-family="&quot;Liberation Sans&quot;, sans-serif" font-size="21" fill="#e05a36" font-weight="bold" text-anchor="start" textLength="17" lengthAdjust="spacingAndGlyphs" >m</text>
<text x="773" y="278" font-family="&quot;Liberation Sans&quot;, sans-serif" font-size="22" fill="#e05a36" font-weight="bold" text-anchor="start" textLength="27" lengthAdjust="spacingAndGlyphs" >V~</text>
<text x="812" y="268.5" font-family="&quot;Liberation Sans&quot;, sans-serif" font-size="26.16" fill="#a884c4" font-weight="bold" text-anchor="start" textLength="44" lengthAdjust="spacingAndGlyphs" >Min.</text>
<text x="871" y="277.5" font-family="&quot;Liberation Sans&quot;, sans-serif" font-size="23.98" fill="#a884c4" font-weight="normal" text-anchor="start" textLength="41" lengthAdjust="spacingAndGlyphs" stroke="#a884c4" stroke-width="0.9">1.32</text>
<text x="928" y="277.5" font-family="&quot;Liberation Sans&quot;, sans-serif" font-size="21" fill="#a884c4" font-weight="bold" text-anchor="start" textLength="17" lengthAdjust="spacingAndGlyphs" >m</text>
<text x="957" y="277.5" font-family="&quot;Liberation Sans&quot;, sans-serif" font-size="22" fill="#a884c4" font-weight="bold" text-anchor="start" textLength="28" lengthAdjust="spacingAndGlyphs" >V~</text>
<circle cx="27" cy="463" r="4.5" fill="#202020"/><circle cx="26.2" cy="462.2" r="3.6" fill="#e8e8e8"/><circle cx="26.7" cy="462.7" r="2.8" fill="#a8a8a8"/>
<circle cx="315" cy="463" r="4.5" fill="#202020"/><circle cx="314.2" cy="462.2" r="3.6" fill="#e8e8e8"/><circle cx="314.7" cy="462.7" r="2.8" fill="#a8a8a8"/>
<circle cx="27" cy="724" r="4.5" fill="#202020"/><circle cx="26.2" cy="723.2" r="3.6" fill="#e8e8e8"/><circle cx="26.7" cy="723.7" r="2.8" fill="#a8a8a8"/>
<circle cx="315" cy="724" r="4.5" fill="#202020"/><circle cx="314.2" cy="723.2" r="3.6" fill="#e8e8e8"/><circle cx="314.7" cy="723.7" r="2.8" fill="#a8a8a8"/>
<text x="92" y="477.5" font-family="&quot;Liberation Serif&quot;, serif" font-size="20.61" fill="#000" font-weight="normal" text-anchor="start" textLength="158" lengthAdjust="spacingAndGlyphs" >ANALOG METER</text>
<path d="M54.1 595.3 A139 139 0 0 1 289.9 595.3" fill="none" stroke="#000" stroke-width="2.2"/>
<line x1="54.1" y1="595.3" x2="41.4" y2="587.4" stroke="#000" stroke-width="1.8"/>
<line x1="57.2" y1="590.6" x2="50.6" y2="586.1" stroke="#000" stroke-width="1.5"/>
<line x1="60.5" y1="586.0" x2="54.0" y2="581.3" stroke="#000" stroke-width="1.5"/>
<line x1="63.9" y1="581.6" x2="57.7" y2="576.6" stroke="#000" stroke-width="1.5"/>
<line x1="67.5" y1="577.3" x2="61.5" y2="572.0" stroke="#000" stroke-width="1.5"/>
<line x1="71.3" y1="573.1" x2="64.1" y2="566.2" stroke="#000" stroke-width="1.5"/>
<line x1="75.3" y1="569.1" x2="69.7" y2="563.4" stroke="#000" stroke-width="1.5"/>
<line x1="79.4" y1="565.3" x2="74.1" y2="559.3" stroke="#000" stroke-width="1.5"/>
<line x1="83.7" y1="561.7" x2="78.6" y2="555.5" stroke="#000" stroke-width="1.5"/>
<line x1="88.1" y1="558.2" x2="83.3" y2="551.8" stroke="#000" stroke-width="1.5"/>
<line x1="92.7" y1="554.9" x2="84.1" y2="542.5" stroke="#000" stroke-width="1.8"/>
<line x1="97.4" y1="551.7" x2="93.1" y2="545.0" stroke="#000" stroke-width="1.5"/>
<line x1="102.2" y1="548.8" x2="98.1" y2="541.9" stroke="#000" stroke-width="1.5"/>
<line x1="107.1" y1="546.1" x2="103.4" y2="539.0" stroke="#000" stroke-width="1.5"/>
<line x1="112.1" y1="543.6" x2="108.7" y2="536.3" stroke="#000" stroke-width="1.5"/>
<line x1="117.2" y1="541.2" x2="113.3" y2="532.0" stroke="#000" stroke-width="1.5"/>
<line x1="122.5" y1="539.1" x2="119.6" y2="531.7" stroke="#000" stroke-width="1.5"/>
<line x1="127.8" y1="537.2" x2="125.2" y2="529.6" stroke="#000" stroke-width="1.5"/>
<line x1="133.1" y1="535.5" x2="130.9" y2="527.9" stroke="#000" stroke-width="1.5"/>
<line x1="138.6" y1="534.1" x2="136.6" y2="526.3" stroke="#000" stroke-width="1.5"/>
<line x1="144.1" y1="532.8" x2="141.0" y2="518.1" stroke="#000" stroke-width="1.8"/>
<line x1="149.6" y1="531.8" x2="148.3" y2="523.9" stroke="#000" stroke-width="1.5"/>
<line x1="155.2" y1="531.0" x2="154.2" y2="523.1" stroke="#000" stroke-width="1.5"/>
<line x1="160.8" y1="530.5" x2="160.1" y2="522.5" stroke="#000" stroke-width="1.5"/>
<line x1="166.4" y1="530.1" x2="166.0" y2="522.1" stroke="#000" stroke-width="1.5"/>
<line x1="172.0" y1="530.0" x2="172.0" y2="520.0" stroke="#000" stroke-width="1.5"/>
<line x1="177.6" y1="530.1" x2="178.0" y2="522.1" stroke="#000" stroke-width="1.5"/>
<line x1="183.2" y1="530.5" x2="183.9" y2="522.5" stroke="#000" stroke-width="1.5"/>
<line x1="188.8" y1="531.0" x2="189.8" y2="523.1" stroke="#000" stroke-width="1.5"/>
<line x1="194.4" y1="531.8" x2="195.7" y2="523.9" stroke="#000" stroke-width="1.5"/>
<line x1="199.9" y1="532.8" x2="203.0" y2="518.1" stroke="#000" stroke-width="1.8"/>
<line x1="205.4" y1="534.1" x2="207.4" y2="526.3" stroke="#000" stroke-width="1.5"/>
<line x1="210.9" y1="535.5" x2="213.1" y2="527.9" stroke="#000" stroke-width="1.5"/>
<line x1="216.2" y1="537.2" x2="218.8" y2="529.6" stroke="#000" stroke-width="1.5"/>
<line x1="221.5" y1="539.1" x2="224.4" y2="531.7" stroke="#000" stroke-width="1.5"/>
<line x1="226.8" y1="541.2" x2="230.7" y2="532.0" stroke="#000" stroke-width="1.5"/>
<line x1="231.9" y1="543.6" x2="235.3" y2="536.3" stroke="#000" stroke-width="1.5"/>
<line x1="236.9" y1="546.1" x2="240.6" y2="539.0" stroke="#000" stroke-width="1.5"/>
<line x1="241.8" y1="548.8" x2="245.9" y2="541.9" stroke="#000" stroke-width="1.5"/>
<line x1="246.6" y1="551.7" x2="250.9" y2="545.0" stroke="#000" stroke-width="1.5"/>
<line x1="251.3" y1="554.9" x2="259.9" y2="542.5" stroke="#000" stroke-width="1.8"/>
<line x1="255.9" y1="558.2" x2="260.7" y2="551.8" stroke="#000" stroke-width="1.5"/>
<line x1="260.3" y1="561.7" x2="265.4" y2="555.5" stroke="#000" stroke-width="1.5"/>
<line x1="264.6" y1="565.3" x2="269.9" y2="559.3" stroke="#000" stroke-width="1.5"/>
<line x1="268.7" y1="569.1" x2="274.3" y2="563.4" stroke="#000" stroke-width="1.5"/>
<line x1="272.7" y1="573.1" x2="279.9" y2="566.2" stroke="#000" stroke-width="1.5"/>
<line x1="276.5" y1="577.3" x2="282.5" y2="572.0" stroke="#000" stroke-width="1.5"/>
<line x1="280.1" y1="581.6" x2="286.3" y2="576.6" stroke="#000" stroke-width="1.5"/>
<line x1="283.5" y1="586.0" x2="290.0" y2="581.3" stroke="#000" stroke-width="1.5"/>
<line x1="286.8" y1="590.6" x2="293.4" y2="586.1" stroke="#000" stroke-width="1.5"/>
<line x1="289.9" y1="595.3" x2="302.6" y2="587.4" stroke="#000" stroke-width="1.8"/>
<text x="35.5" y="587.3" font-family="&quot;Liberation Sans&quot;, sans-serif" font-size="16.5" fill="#000" font-weight="normal" text-anchor="middle" >0</text>
<text x="78.5" y="543.3" font-family="&quot;Liberation Sans&quot;, sans-serif" font-size="16.5" fill="#000" font-weight="normal" text-anchor="middle" >1</text>
<text x="140" y="516.3" font-family="&quot;Liberation Sans&quot;, sans-serif" font-size="16.5" fill="#000" font-weight="normal" text-anchor="middle" >2</text>
<text x="201.5" y="517.8" font-family="&quot;Liberation Sans&quot;, sans-serif" font-size="16.5" fill="#000" font-weight="normal" text-anchor="middle" >3</text>
<text x="264.5" y="541.8" font-family="&quot;Liberation Sans&quot;, sans-serif" font-size="16.5" fill="#000" font-weight="normal" text-anchor="middle" >4</text>
<text x="302" y="587.3" font-family="&quot;Liberation Sans&quot;, sans-serif" font-size="16.5" fill="#000" font-weight="normal" text-anchor="middle" >5</text>
<line x1="170" y1="664" x2="290" y2="566" stroke="#000" stroke-width="1.4"/>
<text x="129.5" y="610.5" font-family="&quot;Liberation Sans&quot;, sans-serif" font-size="18" fill="#96ca7e" font-weight="bold" text-anchor="start" textLength="28.5" lengthAdjust="spacingAndGlyphs" stroke="#96ca7e" stroke-width="0.9">x10</text>
<text x="170" y="610.5" font-family="&quot;Liberation Sans&quot;, sans-serif" font-size="18" fill="#96ca7e" font-weight="bold" text-anchor="start" textLength="13.5" lengthAdjust="spacingAndGlyphs" stroke="#96ca7e" stroke-width="0.9">m</text>
<text x="192.5" y="610.5" font-family="&quot;Liberation Sans&quot;, sans-serif" font-size="18" fill="#96ca7e" font-weight="bold" text-anchor="start" textLength="9.5" lengthAdjust="spacingAndGlyphs" stroke="#96ca7e" stroke-width="0.9">V</text>
<text x="203" y="605" font-family="&quot;Liberation Sans&quot;, sans-serif" font-size="12" fill="#96ca7e" font-weight="normal" text-anchor="start" textLength="11" lengthAdjust="spacingAndGlyphs" >~</text>
<circle cx="170" cy="686" r="8.5" fill="#000"/><line x1="164" y1="692" x2="176" y2="680" stroke="#d0d0d0" stroke-width="2.2"/>
<text x="10" y="794.6" font-family="&quot;Liberation Sans&quot;, sans-serif" font-size="18.9" fill="#000" font-weight="normal" text-anchor="start" textLength="190" lengthAdjust="spacingAndGlyphs" >1.83mV~  @0:11'34.400''</text>
<text x="10" y="814.6" font-family="&quot;Liberation Sans&quot;, sans-serif" font-size="18.9" fill="#000" font-weight="normal" text-anchor="start" textLength="190" lengthAdjust="spacingAndGlyphs" >1.93mV~  @0:11'34.600''</text>
<text x="10" y="834.6" font-family="&quot;Liberation Sans&quot;, sans-serif" font-size="18.9" fill="#000" font-weight="normal" text-anchor="start" textLength="190" lengthAdjust="spacingAndGlyphs" >1.99mV~  @0:11'34.800''</text>
<text x="10" y="854.6" font-family="&quot;Liberation Sans&quot;, sans-serif" font-size="18.9" fill="#fff" font-weight="normal" text-anchor="start" textLength="190" lengthAdjust="spacingAndGlyphs" >1.94mV~  @0:11'35.000''</text>
<path d="M306 796 L319 796 L312.5 789 Z" fill="#000"/>
<path d="M306 850 L319 850 L312.5 857 Z" fill="#000"/>
<path d="M349 800.5 L357 794 L357 807 Z" fill="#000"/>
<path d="M983 800.5 L975 794 L975 807 Z" fill="#000"/>
<rect x="341.60" y="818" width="15.20" height="24" fill="#3c1c88"/>
<rect x="360.35" y="818" width="15.20" height="24" fill="#3c1c88"/>
<rect x="379.10" y="818" width="15.20" height="24" fill="#3c1c88"/>
<rect x="397.85" y="818" width="15.20" height="24" fill="#3c1c88"/>
<rect x="416.60" y="818" width="15.20" height="24" fill="#3c1c88"/>
<rect x="435.35" y="818" width="15.20" height="24" fill="#3c1c88"/>
<rect x="454.10" y="818" width="15.20" height="24" fill="#3c1c88"/>
<rect x="472.85" y="818" width="15.20" height="24" fill="#3c1c88"/>
<rect x="491.60" y="818" width="15.20" height="24" fill="#3c1c88"/>
<rect x="510.35" y="818" width="15.20" height="24" fill="#3c1c88"/>
<rect x="529.10" y="818" width="15.20" height="24" fill="#3c1c88"/>
<rect x="547.85" y="818" width="15.20" height="24" fill="#3c1c88"/>
<rect x="566.60" y="818" width="15.20" height="24" fill="#3c1c88"/>
<rect x="585.35" y="818" width="15.20" height="24" fill="#3c1c88"/>
<rect x="604.10" y="818" width="15.20" height="24" fill="#3c1c88"/>
<rect x="622.85" y="818" width="15.20" height="24" fill="#3c1c88"/>
<rect x="641.60" y="818" width="15.20" height="24" fill="#3c1c88"/>
<rect x="660.35" y="818" width="15.20" height="24" fill="#3c1c88"/>
<rect x="679.10" y="818" width="15.20" height="24" fill="#3c1c88"/>
<rect x="697.85" y="818" width="15.20" height="24" fill="#3c1c88"/>
<rect x="716.60" y="818" width="15.20" height="24" fill="#3c1c88"/>
<rect x="735.35" y="818" width="15.20" height="24" fill="#3c1c88"/>
<rect x="754.10" y="818" width="15.20" height="24" fill="#3c1c88"/>
<rect x="772.85" y="818" width="15.20" height="24" fill="#3c1c88"/>
<rect x="791.60" y="818" width="15.20" height="24" fill="#3c1c88"/>
<rect x="810.35" y="818" width="15.20" height="24" fill="#3c1c88"/>
<rect x="829.10" y="818" width="15.20" height="24" fill="#3c1c88"/>
<rect x="847.85" y="818" width="15.20" height="24" fill="#3c1c88"/>
<rect x="866.60" y="818" width="15.20" height="24" fill="#3c1c88"/>
<rect x="885.35" y="818" width="15.20" height="24" fill="#3c1c88"/>
<rect x="904.10" y="818" width="15.20" height="24" fill="#3c1c88"/>
<rect x="922.85" y="818" width="15.20" height="24" fill="#3c1c88"/>
<rect x="941.60" y="818" width="15.20" height="24" fill="#3c1c88"/>
<rect x="960.35" y="818" width="15.20" height="24" fill="#3c1c88"/>
<rect x="979.10" y="818" width="9.50" height="24" fill="#3c1c88"/>
<text x="678" y="864" font-family="&quot;Liberation Sans&quot;, sans-serif" font-size="17.44" fill="#000" font-weight="normal" text-anchor="start" textLength="212" lengthAdjust="spacingAndGlyphs" >Data in buffer : 3476 of 3476</text>
<path d="M977 867 L991 853 M982 867 L991 858 M987 867 L991 863" stroke="#fff" stroke-width="1"/><path d="M978 867 L991 854 M983 867 L991 859 M988 867 L991 864" stroke="#808080" stroke-width="1"/>
<path d="M311 414 L325 400 M316 414 L325 405 M321 414 L325 410" stroke="#fff" stroke-width="1"/><path d="M312 414 L325 401 M317 414 L325 406 M322 414 L325 411" stroke="#808080" stroke-width="1"/>
<g stroke="#000" stroke-width="1.8" stroke-linejoin="round">
<path d="M357 224.5 L357 212.5 L359 211 L364 211 L366 213 L373 213 L373 217" fill="#dce88e"/>
<path d="M357 224.5 L361 217 L377.5 217 L373 224.5 Z" fill="#d4e080"/>
</g>
<rect x="389" y="207.5" width="23" height="23.5" rx="1.5" fill="#000"/>
<rect x="392.5" y="208.5" width="15" height="12" fill="#f4f0f0"/>
<rect x="392.5" y="208.5" width="15" height="2" fill="#f0b4b4"/>
<rect x="396.5" y="223.5" width="11" height="7.5" fill="#a8a8a8"/>
<rect x="399.5" y="225.5" width="3" height="3" fill="#000"/>
<g stroke="#000" stroke-width="1.6">
<path d="M429 221 L429 208.5 L438 208.5 L443 213.5 L443 221" fill="#fff"/>
<rect x="424" y="221" width="24" height="10" fill="#fff"/>
</g>
<rect x="431" y="211" width="2" height="2" fill="#000"/><rect x="431" y="215" width="8" height="2" fill="#000"/><line x1="424" y1="226" x2="448" y2="226" stroke="#000" stroke-width="1.5"/>
<rect x="426" y="223" width="20" height="2" fill="#c8c8c8"/>
<path d="M470 216 L478 208 L478 212 L483 212 L483 220 L478 220 L478 224 Z" fill="#e04a2a" stroke="#8a2010" stroke-width="0.8"/>
<path d="M480 212.5 L489 212.5 L494 217.5 L494 231 L480 231 Z" fill="#fff" stroke="#000" stroke-width="1.6"/>
<path d="M483 218 L483 236 L487 232 L491 240 L494 238.5 L490.5 231 L496 231 Z" fill="#e0e090" stroke="#000" stroke-width="1.3"/>
<path d="M506 209.5 L514 209.5 L518 213.5 L518 228 L506 228 Z" fill="#fff" stroke="#000" stroke-width="1.8"/>
<rect x="509" y="213" width="3" height="2" fill="#000"/><rect x="509" y="217" width="3" height="2" fill="#000"/><rect x="509" y="221" width="3" height="2" fill="#000"/><rect x="509" y="225" width="3" height="1.5" fill="#000"/>
<path d="M515 219 L521 219 L521 214.5 L531 223 L521 231.5 L521 227 L515 227 Z" fill="#e04a2a" stroke="#6a1a0a" stroke-width="0.8"/>
<rect x="550" y="212" width="7" height="19.5" fill="#98cc88"/>
<rect x="550" y="212" width="1.6" height="19.5" fill="#2e5a2e"/>
<rect x="558" y="212" width="1.6" height="19.5" fill="#2e5a2e"/>
<path d="M559.5 213.5 L583 221 L559.5 231 Z" fill="#b4d8a8"/>
<path d="M559.5 213.5 L583 221" stroke="#4a6a4a" stroke-width="1.6"/>
<path d="M566 226 L580 222" stroke="#f0f4f0" stroke-width="2"/>

<rect x="619" y="207.5" width="4" height="2.5" fill="none" stroke="#000" stroke-width="1.3"/>
<rect x="612.5" y="210.5" width="16" height="4" fill="#000"/>
<rect x="614" y="211.5" width="13" height="1.2" fill="#909090"/>
<path d="M614.5 214.5 L626.5 214.5 L626 231.5 L615 231.5 Z" fill="#d8d8d8" stroke="#000" stroke-width="1.6"/>
<line x1="617.8" y1="215" x2="617.8" y2="230" stroke="#000" stroke-width="1.3"/>
<line x1="620.5" y1="215" x2="620.5" y2="230" stroke="#000" stroke-width="1.3"/>
<line x1="623.2" y1="215" x2="623.2" y2="230" stroke="#000" stroke-width="1.3"/>
<path d="M611 221 L614 218 M630 221 L627 218" stroke="#000" stroke-width="1.2"/>
<path d="M652 213 L669.5 231.5" stroke="#6e9a4e" stroke-width="3.6"/>
<path d="M663 224 L669.5 231.5" stroke="#c8401e" stroke-width="4"/>
<path d="M646 214.5 L651 210 L656 208 L660 208 L660 209.5 L656 211 L654 216 L650 218 Z" fill="#000"/>
<path d="M664.5 209 L664.5 223" stroke="#000" stroke-width="1.6"/>
<path d="M647 224 Q646 229 650 230.5 L656 232 L658 230.5 L652.5 227 L652 223 L649.5 221.5 Z" fill="#fff" stroke="#000" stroke-width="1.3"/>
<path d="M30 215 L30 208 Q30 205 34 205 L48 205" fill="none" stroke="#000" stroke-width="2.2"/>
<path d="M28 215 L28 209 Q28 204 33 203.5" fill="none" stroke="#fff" stroke-width="1.6"/>
<rect x="25" y="214" width="12" height="4" fill="#a0a0a0" stroke="#000" stroke-width="1.2"/>
<rect x="20" y="218" width="22" height="15" fill="#d8d8d8" stroke="#000" stroke-width="1.6"/>
<path d="M23 222 L39 222 M23 225.5 L39 225.5 M23 229 L35 229" stroke="#707070" stroke-width="1"/>
<path d="M14 233.5 L43 233.5" stroke="#000" stroke-width="1.8"/>
<path d="M21 236 L39 236" stroke="#000" stroke-width="1.5"/>
<path d="M17 215 L17 232 M45 215 L45 232" stroke="#909090" stroke-width="1"/>
<g fill="none" stroke-width="2">
<path d="M64 219 Q72 206 83 206 Q93 207 97 216" stroke="#8c8c8c" transform="translate(1,1)"/>
<path d="M86 207 L80 235" stroke="#8c8c8c" transform="translate(1,1)"/>
<path d="M64 219 Q72 206 83 206 Q93 207 97 216" stroke="#f4f4f4"/>
<path d="M86 207 L80 235" stroke="#f4f4f4"/>
</g>
<rect x="108" y="210" width="34" height="1.5" fill="#f2f2f2"/><rect x="109" y="211.5" width="34" height="1" fill="#9a9a9a"/>
<rect x="113" y="210" width="2" height="3" fill="#c8c8c8"/>
<rect x="108" y="216" width="34" height="1.5" fill="#f2f2f2"/><rect x="109" y="217.5" width="34" height="1" fill="#9a9a9a"/>
<rect x="113" y="216" width="2" height="3" fill="#c8c8c8"/>
<rect x="108" y="222" width="34" height="1.5" fill="#f2f2f2"/><rect x="109" y="223.5" width="34" height="1" fill="#9a9a9a"/>
<rect x="113" y="222" width="2" height="3" fill="#c8c8c8"/>
<rect x="108" y="228" width="34" height="1.5" fill="#f2f2f2"/><rect x="109" y="229.5" width="34" height="1" fill="#9a9a9a"/>
<rect x="113" y="228" width="2" height="3" fill="#c8c8c8"/>
<rect x="108" y="234" width="34" height="1.5" fill="#f2f2f2"/><rect x="109" y="235.5" width="34" height="1" fill="#9a9a9a"/>
<rect x="113" y="234" width="2" height="3" fill="#c8c8c8"/>
<path d="M157 205 L157 235 L188 235" fill="none" stroke="#f4f4f4" stroke-width="2"/>
<path d="M158 206 L158 236 L189 236" fill="none" stroke="#9a9a9a" stroke-width="1" transform="translate(1,0)"/>
<rect x="159" y="210" width="2" height="2" fill="#fff"/>
<rect x="163" y="232" width="2" height="2" fill="#fff"/>
<rect x="159" y="215" width="2" height="2" fill="#fff"/>
<rect x="168" y="232" width="2" height="2" fill="#fff"/>
<rect x="159" y="220" width="2" height="2" fill="#fff"/>
<rect x="173" y="232" width="2" height="2" fill="#fff"/>
<rect x="159" y="225" width="2" height="2" fill="#fff"/>
<rect x="178" y="232" width="2" height="2" fill="#fff"/>
<rect x="159" y="230" width="2" height="2" fill="#fff"/>
<rect x="183" y="232" width="2" height="2" fill="#fff"/>
<path d="M199 212 L209 208" stroke="#5050a0" stroke-width="2.5"/>
<path d="M209 208 Q215 205 221 207" stroke="#90c890" stroke-width="2.5" fill="none"/>
<path d="M224 208 L234 212" stroke="#e06040" stroke-width="2.5"/>
<path d="M199 221 L208 221" stroke="#5050a0" stroke-width="2.5"/>
<path d="M210 221 L220 221" stroke="#90c890" stroke-width="2"/>
<path d="M224 221 L234 221" stroke="#e06040" stroke-width="2.5"/>
<path d="M199 228 L234 228" stroke="#8a8a8a" stroke-width="1.2"/>
<path d="M221 203 L216 234" stroke="#000" stroke-width="1.8"/>
<circle cx="262.8" cy="220" r="14" fill="#3a1f88"/>
<circle cx="263" cy="211.5" r="2.6" fill="#fff"/>
<path d="M258 216 L265.5 216 L265.5 227 L268 227 L268 230 L257.5 230 L257.5 227 L260 227 L260 219 L258 219 Z" fill="#fff"/></svg>
</body></html>
